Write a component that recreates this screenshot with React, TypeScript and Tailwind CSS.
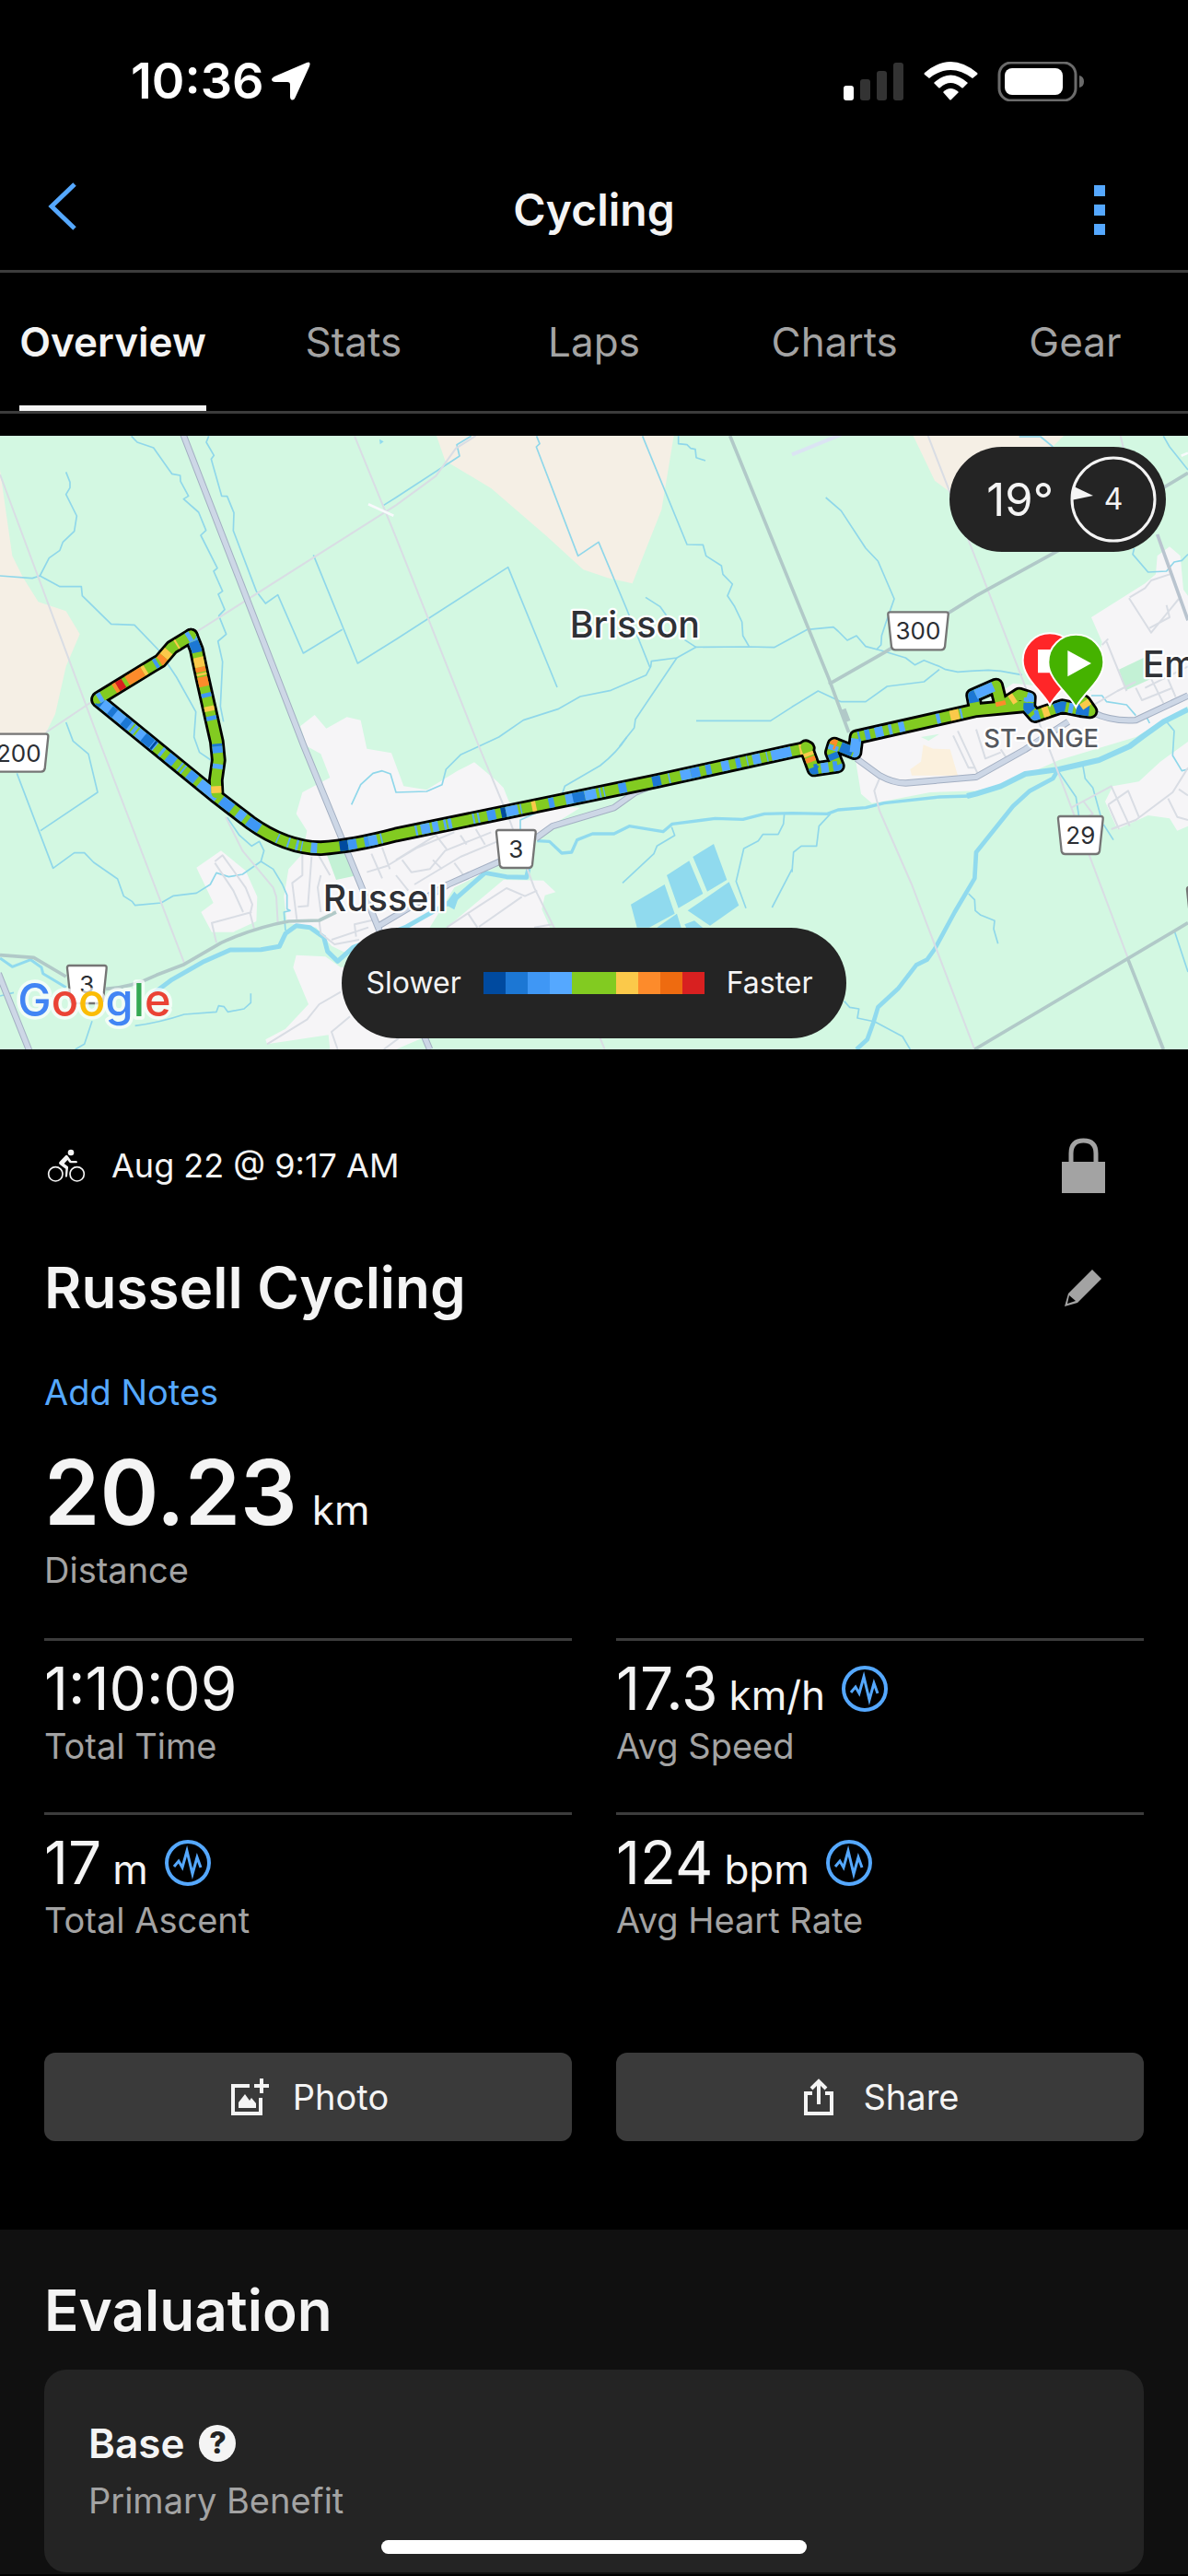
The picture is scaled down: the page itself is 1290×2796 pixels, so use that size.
import React from "react";

const C = {
  navy: "#004a9f",
  deep: "#1c77d4",
  mid: "#3f97f5",
  light: "#55a8ff",
  green: "#82cb21",
  yellow: "#fbc94a",
  orange: "#fd8b2b",
  amber: "#ee6b10",
  red: "#d82020",
};

type Segment = [string, number, number];

/* Each leg is drawn green, with coloured stretches measured along its length. */
const legs: { d: string; length: number; segments: Segment[] }[] = [
  {
    d: "M320 2280 L700 2590 L815 2678 Q930 2760 1045 2762 Q1150 2755 1290 2718 L2140 2543 L2580 2446 L2632 2436",
    length: 2500,
    segments: [
      [C.light, 0, 240], [C.deep, 0, 18], [C.deep, 50, 70], [C.deep, 105, 130], [C.green, 140, 146], [C.green, 158, 164],
      [C.deep, 190, 225], [C.navy, 228, 236], [C.light, 262, 272], [C.mid, 290, 320], [C.light, 340, 346], [C.light, 354, 360],
      [C.mid, 378, 410], [C.light, 425, 500], [C.mid, 515, 560], [C.light, 582, 610], [C.mid, 625, 670], [C.light, 735, 740],
      [C.light, 772, 778], [C.light, 800, 808], [C.light, 818, 822], [C.light, 850, 870], [C.navy, 944, 972], [C.mid, 972, 1000],
      [C.mid, 1026, 1040], [C.light, 1040, 1068], [C.light, 1080, 1085], [C.light, 1195, 1202], [C.light, 1214, 1244],
      [C.light, 1252, 1272], [C.light, 1290, 1298], [C.light, 1304, 1316], [C.light, 1386, 1392], [C.light, 1402, 1408],
      [C.mid, 1434, 1462], [C.navy, 1480, 1496], [C.light, 1496, 1536], [C.light, 1544, 1548], [C.yellow, 1582, 1596],
      [C.mid, 1638, 1656], [C.light, 1694, 1722], [C.deep, 1718, 1758], [C.light, 1758, 1796], [C.light, 1806, 1811],
      [C.light, 1820, 1824], [C.mid, 1870, 1896], [C.deep, 1982, 2010], [C.light, 2036, 2041], [C.light, 2076, 2110],
      [C.mid, 2110, 2140], [C.mid, 2160, 2178], [C.light, 2212, 2238], [C.mid, 2260, 2276], [C.light, 2296, 2300],
      [C.light, 2316, 2342], [C.light, 2362, 2366], [C.light, 2378, 2444], [C.yellow, 2472, 2484],
    ],
  },
  {
    d: "M705 2582 L703 2540 L712 2475 L706 2415 L660 2210 L640 2115 L622 2070",
    length: 520,
    segments: [
      [C.yellow, 0, 22], [C.light, 78, 94], [C.mid, 130, 152], [C.deep, 152, 160], [C.mid, 238, 252], [C.yellow, 268, 284],
      [C.mid, 314, 328], [C.orange, 350, 382], [C.yellow, 386, 394], [C.orange, 398, 414], [C.yellow, 414, 446],
      [C.deep, 462, 500], [C.light, 500, 520],
    ],
  },
  {
    d: "M622 2070 L560 2108 L522 2152 L500 2165 L320 2275",
    length: 365,
    segments: [
      [C.light, 0, 14], [C.yellow, 50, 56], [C.yellow, 88, 112], [C.orange, 112, 132], [C.mid, 140, 152], [C.yellow, 184, 196],
      [C.orange, 196, 255], [C.red, 268, 292], [C.orange, 292, 304], [C.light, 350, 365],
    ],
  },
  {
    d: "M2625 2432 L2652 2505 L2728 2494 L2710 2450 L2718 2424 L2784 2450 L2790 2400 L3180 2312 L3350 2296",
    length: 880,
    segments: [
      [C.yellow, 18, 30], [C.orange, 34, 50], [C.deep, 68, 86], [C.light, 96, 120], [C.mid, 134, 150], [C.deep, 170, 190],
      [C.light, 200, 216], [C.orange, 218, 226], [C.deep, 240, 280], [C.light, 284, 330], [C.mid, 340, 346], [C.mid, 362, 378],
      [C.light, 394, 420], [C.light, 438, 448], [C.light, 470, 488], [C.light, 590, 602], [C.yellow, 634, 662], [C.light, 666, 672],
    ],
  },
  {
    d: "M3178 2308 L3170 2265 L3245 2232 L3262 2300 L3320 2262 L3352 2272 L3350 2305 L3372 2330 L3460 2300 L3520 2312 L3552 2316 L3530 2285",
    length: 560,
    segments: [
      [C.deep, 20, 50], [C.light, 50, 110], [C.orange, 170, 184], [C.yellow, 220, 236], [C.light, 276, 296], [C.deep, 300, 330],
      [C.mid, 342, 360], [C.yellow, 372, 392], [C.deep, 410, 446], [C.light, 456, 470], [C.deep, 480, 520], [C.yellow, 540, 560],
    ],
  },
];

function Shield({ x, y, w, label }: { x: number; y: number; w: number; label: string }) {
  return (
    <g transform={`translate(${x} ${y})`}>
      <path
        d={`M10 3 H${w - 10} Q${w - 2} 3 ${w - 3} 12 L${w - 14} 116 Q${w - 16} 126 ${w - 26} 126 H26 Q16 126 14 116 L3 12 Q2 3 10 3 Z`}
        fill="#fff"
        stroke="#757575"
        strokeWidth="7"
      />
      {label && (
        <text x={w / 2} y="93" textAnchor="middle" fontSize="78" fill="#2b2e33">
          {label}
        </text>
      )}
    </g>
  );
}

function RouteMap() {
  return (
    <svg
      className="block h-[666px] w-full font-['Inter',sans-serif]"
      viewBox="0 1419 3870 1998"
      preserveAspectRatio="xMidYMid slice"
      role="img"
      aria-label="Route map"
    >
      <rect y="1419" width="3870" height="1998" fill="#d3f8e2" />

      {/* farmland */}
      <g fill="#f5efe5">
        <path d="M0 1530 L20 1670 40 1810 75 1880 125 1960 215 1990 260 2065 215 2170 180 2325 150 2385 0 2480Z" />
        <path d="M1422 1419 L1450 1500 1600 1590 1780 1745 1900 1855 1980 1882 2060 1900 2155 1660 2195 1419Z" />
        <path d="M2975 1419 L3045 1565 3200 1680 3465 1419Z" />
      </g>

      {/* built-up areas */}
      <g fill="#f6f5f7">
        <path d="M978 2365 L1025 2328 1063 2372 1130 2335 1175 2345 1195 2438 1275 2452 1315 2560 1390 2572 1490 2510 1545 2482 1620 2545 1640 2565 1660 2615 1890 2630 1745 2720 1620 2820 1480 2890 1400 3020 1290 3080 1120 3100 1080 3080 1030 3020 935 3005 925 2920 940 2830 985 2780 1000 2705 965 2650 985 2580 1075 2532 1045 2455 1000 2430Z" />
        <path d="M640 2825 L720 2770 800 2835 838 2920 835 3000 760 3035 690 3035 655 2970 695 2940Z" />
        <path d="M965 3110 L955 3150 1005 3270 930 3350 865 3385 870 3400 1070 3370 1075 3417 1290 3417 1400 3370 1400 3110 1455 3020 1640 2865 1770 2867 1810 2905 1775 2915 1765 2960 1800 3040 1110 3150 1060 3115Z" />
        <path d="M2775 2400 L3180 2310 3300 2225 3555 2250 3590 2090 3555 2010 3730 1900 3765 1870 3770 1810 3810 1780 3845 1810 3855 1920 3870 1940 3870 2300 3700 2400 3450 2475 3280 2550 3180 2575 3030 2580 2875 2610 2840 2615 2805 2585Z" />
        <path d="M3870 2415 L3780 2480 3710 2545 3625 2560 3600 2610 3640 2700 3740 2655 3810 2665 3835 2705 3870 2690Z" />
      </g>
      <path d="M1065 2785 L1120 2775 1165 2850 1095 2865Z M3645 2180 L3730 2140 3750 2210 3668 2248Z" fill="#c3f1d5" />
      <path d="M3008 2425 L3040 2438 3095 2440 3120 2525 2970 2525 2965 2505 3000 2480Z" fill="#fbf0dd" />
      <path d="M3000 2400 L3060 2390 3025 2412Z" fill="#d3f8e2" />

      {/* quarry ponds */}
      <g fill="#90daee">
        <path d="M2055 2945 L2165 2880 2198 2975 2115 3020 2075 3020Z M2172 2850 L2245 2803 2290 2910 2210 2957Z M2257 2790 L2325 2748 2368 2865 2304 2903Z M2240 2965 L2375 2872 2407 2948 2313 3014Z M2140 3020 L2205 2975 2222 3030Z M2230 3010 L2262 2998 2300 3030 2240 3030Z" />
        <path d="M1236 1430 l14 8 -12 9Z" />
      </g>

      {/* streams */}
      <g fill="none" stroke="#8fd7ea" strokeWidth="5" strokeLinejoin="round">
        <g transform="translate(0 1380)">
          <path d="M0 495 L105 503 130 495 160 437 195 412 205 385 242 350 250 300 215 230 228 208 228 190 215 157" />
          <path d="M130 495 L195 530 265 530 268 560 362 652 438 655 515 735 575 825 638 938 632 1020 650 1070 687 1095" />
          <path d="M428 40 L447 60 500 78 560 163 587 168 588 187 614 235 598 245 647 288 671 347 654 363 708 470 696 480 725 545 711 555 732 605 713 625 737 685 710 708 725 775 718 920 728 970" />
          <path d="M680 40 L672 60 697 103 688 115 722 235 740 236 762 290 760 348 835 545 865 585 905 557 988 747 1115 670" />
          <path d="M1021 427 L1165 780 1290 702 1655 467 1815 858" />
          <path d="M1250 265 L1290 240 1497 105 1488 68 1535 40" />
          <path d="M215 972 L238 1033 288 1075 318 1200 132 1325" />
        </g>
        <g transform="translate(0 2400)">
          <path d="M55 118 L173 427 242 377 275 377 305 408 383 462 403 518 430 535 440 548 525 540 565 517 640 508 685 480 705 442 745 455 790 447 850 405 860 370 845 340 820 355 780 320 740 262" />
          <path d="M850 405 L890 430 920 480 935 515 935 560 945 565 925 570 930 630" />
          <path d="M440 940 Q520 930 600 903 L705 895 712 875 730 878 742 895 795 885 817 865 817 835 M300 925 L275 1000 245 1017 M0 843 L45 832" />
          <path d="M1145 220 L1175 155 1215 118 1245 110 1272 120 1290 180 1390 177 1440 155 1453 105 1500 58 1625 0 1705 -55 1820 -92 1890 -132 1990 -152 2105 -202 2120 -230 2122 -247 2205 -258 2268 -293 2440 -294 2522 -292 2580 -323" />
          <path d="M2042 0 Q2010 50 1955 93 L1840 160 1830 190 M1695 300 V270 L1750 245" />
        </g>
        <g transform="translate(1290 1380)">
          <path d="M458 40 L468 65 457 75 593 430 660 385 750 600 828 795" />
          <path d="M803 40 L948 393 1000 394 1010 430 1060 462 1065 490 1096 522 1080 560 1102 593 1127 645 1130 690 1150 725" />
          <path d="M813 565 L860 595 885 630 M940 703 L978 728 M915 762 L780 962 776 990 728 1050" />
          <path d="M978 967 L1220 967 1290 922 1375 870 1450 905 1530 905 1600 855 1720 840 1770 800" />
          <path d="M920 40 L920 65 948 68 960 80 975 83 978 110 1008 120" />
        </g>
        <g transform="translate(2580 1380)">
          <path d="M110 240 L160 283 240 405 280 447 333 570 305 650 292 690 290 720 275 735" />
          <path d="M0 697 L50 670 135 662 150 675 180 705 210 690 240 725 290 738 370 762 400 785 430 770 480 790 500 800 540 808 580 805 640 802 680 805 750 818" />
          <path d="M740 42 L810 42 850 75 M1210 40 L1230 75 1290 150 M1115 405 L1110 425 1160 483 1220 480 1245 450 1270 445 1290 425" />
          <path d="M975 885 L1010 885 1025 905 1090 915 1120 950 M1155 955 L1165 975 M1220 970 L1245 1000 1240 1080 1270 1130 1290 1125" />
        </g>
        <g transform="translate(2580 2400)">
          <path d="M125 250 L88 290 80 355 30 355 5 375 0 440 M870 115 L925 195 935 260 M948 95 L955 135 980 165 1005 255 M1015 285 L1047 335" />
          <path d="M575 510 L595 530 597 565 615 580 660 598 657 625 671 673 M1247 635 L1290 765 M170 860 L188 880 218 885 213 915 270 927 360 975 385 1017" />
          <path d="M-25 250 L-28 283 -45 317 -95 317 -110 338 -157 363 -182 470 -150 557 M0 430 L-65 555 M-392 293 L-382 320 -440 355 -450 380 -552 475" />
        </g>
      </g>

      {/* rivers */}
      <g fill="none" stroke="#90daee" strokeLinejoin="round">
        <path d="M500 3235 L560 3190 660 3133 750 3093 850 3092 910 3082 930 3040 965 3014 1010 3020 1055 3052 1067 3098 1100 3130 1150 3085 1320 3020 1390 2980 1480 2930 1580 2842 1650 2855 1715 2857 1722 2828" strokeWidth="15" />
        <path d="M1750 2738 L1790 2740 1830 2778 1862 2775 1880 2735 1930 2715 2000 2715 2050 2690 2160 2708 2190 2683 2330 2665 2420 2668 2490 2650 2580 2648 2695 2650 2730 2637 2820 2630 2880 2615 3060 2595 3160 2592" strokeWidth="10" />
        <path d="M3150 2592 L3180 2585 3260 2560 3340 2520 3450 2505 3580 2475 3680 2430 3720 2400 3790 2350 3870 2310" strokeWidth="18" />
        <path d="M3445 2510 L3430 2535 3355 2575 3300 2625 3180 2775 3175 2860 3110 2970 3045 3090 3020 3125 2985 3142 2925 3220 2860 3280 2845 3330 2825 3385 2790 3417" strokeWidth="14" />
        <path d="M0 3120 L40 3148 100 3125 135 3150 140 3170 215 3215" strokeWidth="9" />
      </g>
      <path d="M1450 2945 L1480 2903 1495 2920 1480 2962Z" fill="#90daee" />

      {/* minor roads */}
      <g fill="none" stroke="#d9dde4" strokeWidth="6" strokeLinejoin="round">
        <path d="M0 1545 L330 2430 600 3135 M150 2385 L620 2070 1290 1645 1420 1550 1485 1460 1550 1419 M1155 1420 L1290 1750 1560 2430 1660 2670 1740 2890 1810 3030 1970 3417" />
        <path d="M735 2660 L790 2770 890 2890 900 2920 905 3005 M3023 1419 L3330 2210 3430 2470 3870 3640 M2865 2535 L2848 2575 2865 2640 2970 2880 3175 3417 M3650 1419 L3670 1500" />
        <path d="M700 2805 L725 2785 800 2890 822 2945 815 2975 828 3025 M700 2810 L760 2900 792 2970 M820 2970 L690 3005 705 3070" />
        <path d="M985 2780 V2850 L952 2875 967 2995 M1015 2790 L1003 2950 970 2953 M1035 2780 L1075 2850 M1045 2850 L1035 2890 1045 2970 M1040 3000 L1045 3040 1090 3075 1170 3060 M1160 3050 L1155 3010 1220 2995 M1080 3060 L1200 3020" />
        <path d="M1195 2840 L1260 2820 1360 2760 1480 2710 M1210 2780 L1245 2860 M1245 2760 L1270 2830 M1290 2800 L1420 2720 1455 2765 M1310 2800 L1340 2840 1400 2830 1450 2770 1600 2710 M1410 2800 L1440 2830 M1480 2810 L1510 2850 M1500 2720 L1520 2750 M1550 2700 L1580 2750 M1350 2880 L1500 2790 1620 2740 M1290 2850 L1330 2900" />
        <path d="M1455 3020 L1560 2950 1650 2892 1710 2918 1750 2900 M1525 2975 L1555 3020 M1560 3018 L1700 2920 M1740 3020 L1800 3010 M870 3400 L1000 3320 1040 3270 1110 3230 M1100 3417 L1080 3360 1140 3310 M1250 3417 L1300 3380" />
        <path d="M3105 2395 L3155 2500 3175 2500 M3120 2380 L3190 2530 M3180 2375 L3210 2470 3260 2450 M3260 2440 L3280 2470" />
        <path d="M3680 1945 L3730 1915 3750 1890 3810 1870 M3678 1948 L3750 2060 3840 1950 M3745 2045 L3810 2010 3800 1970 M3605 2090 L3670 2250 M3610 2080 L3590 2100 M3555 2300 L3640 2250 3700 2220 M3700 2240 L3720 2280 3820 2240 M3730 2240 L3870 2170 M3745 2200 L3790 2290 M3800 2200 L3830 2270" />
        <path d="M3490 2630 L3620 2560 3680 2690 M3620 2700 L3700 2670 3820 2580 3870 2500 M3610 2620 L3675 2575 3710 2660 M3610 2620 L3645 2700 M3530 2610 L3560 2650 3520 2670 M3805 2600 L3835 2660 3870 2670 M3840 2570 L3870 2590" />
      </g>
      <path d="M1200 1642 L1282 1679 M3848 1484 L3870 1475" stroke="#f8fafc" strokeWidth="8" />
      <path d="M2580 1480 L2740 1415" stroke="#dbe4f3" strokeWidth="12" />

      {/* county roads */}
      <g fill="none" stroke="#b1c9c8" strokeWidth="11" strokeLinejoin="round">
        <path d="M2378 1419 L2580 1915 2700 2210 2765 2385 M2700 2228 L2880 2125 3180 1940 3480 1775 3870 1540" />
        <path d="M3770 1740 L3870 2020" stroke="#b9c4cf" />
        <path d="M0 3110 L110 3118 215 3180 M345 3220 Q430 3215 510 3175 L600 3140 720 3070 Q830 3020 940 3000 L1040 2997 1095 2970" />
        <path d="M3175 3417 L3870 3005 M3675 3125 L3790 3417" />
        <path d="M2745 2310 L2760 2350" strokeWidth="22" />
      </g>

      {/* highways */}
      <g fill="none" strokeLinejoin="round">
        {[
          ["#a3afc2", 22],
          ["#cdd7e6", 16],
        ].map(([stroke, width]) => (
          <g key={stroke} stroke={stroke as string} strokeWidth={width}>
            <path d="M597 1415 L990 2430 1240 3040 1400 3417 M-5 3170 L95 3420" />
            <path d="M1225 3020 L1460 2880 1640 2800 M1745 2730 L1800 2690 2000 2630 2070 2580 2120 2560" />
            <path d="M2790 2470 L2865 2525 Q2910 2550 2950 2550 L3180 2530 3340 2440 3480 2350 M3560 2320 Q3620 2350 3700 2345 L3870 2265" />
          </g>
        ))}
      </g>

      {/* place names */}
      <g fill="#2f3136" stroke="#fff" strokeWidth="14" strokeLinejoin="round" paintOrder="stroke" fontWeight="500">
        <text x="1856" y="2075" fontSize="118">Brisson</text>
        <text x="1052" y="2966" fontSize="118">Russell</text>
        <text x="3722" y="2204" fontSize="118">Em</text>
        <text x="3392" y="2434" fontSize="82" fill="#55585e" textAnchor="middle">
          ST-ONGE
        </text>
      </g>

      <Shield x={-38} y={2387} w={198} label="200" />
      <Shield x={216} y={3141} w={134} label="3" />
      <Shield x={1614} y={2700} w={134} label="3" />
      <Shield x={2890} y={1990} w={202} label="300" />
      <Shield x={3444} y={2655} w={152} label="29" />
      <Shield x={3864} y={2885} w={134} label="" />

      {/* recorded track */}
      <g fill="none" strokeLinejoin="round">
        {legs.map((leg) => (
          <path key={leg.d} d={leg.d} stroke="#000" strokeWidth="50" strokeLinecap="round" />
        ))}
        {legs.map((leg) => (
          <g key={leg.d}>
            <path d={leg.d} stroke={C.green} strokeWidth="33" strokeLinecap="round" />
            {leg.segments.map(([color, from, to]) => (
              <path
                key={`${color}${from}`}
                d={leg.d}
                pathLength={leg.length}
                stroke={color}
                strokeWidth="33"
                strokeDasharray={`0 ${from} ${to - from} 4000`}
              />
            ))}
          </g>
        ))}
      </g>

      {/* finish and start pins */}
      <g stroke="#fff" strokeWidth="6">
        <path d="M3420 2297 C3398 2252 3332 2210 3332 2150 A88 88 0 0 1 3508 2150 C3508 2210 3442 2252 3420 2297Z" fill="#ff2628" />
        <path d="M3384 2118 h70 v70 h-70Z" fill="#fff" />
        <path d="M3505 2303 C3483 2258 3415 2216 3415 2156 A90 90 0 0 1 3595 2156 C3595 2216 3527 2258 3505 2303Z" fill="#45b200" />
        <path d="M3478 2118 L3555 2160 L3478 2203Z" fill="#fff" stroke="none" />
      </g>

      <text
        x="58"
        y="3308"
        fontSize="146"
        fontWeight="500"
        stroke="#fff"
        strokeOpacity="0.7"
        strokeWidth="22"
        strokeLinejoin="round"
        paintOrder="stroke"
      >
        <tspan fill="#4285f4">G</tspan>
        <tspan fill="#ea4335">o</tspan>
        <tspan fill="#fbbc05">o</tspan>
        <tspan fill="#4285f4">g</tspan>
        <tspan fill="#34a853">l</tspan>
        <tspan fill="#ea4335">e</tspan>
      </text>
    </svg>
  );
}

function StatusBar() {
  return (
    <div className="flex h-[162px] items-center justify-between pt-[14px] pr-[112px] pl-[142px]">
      <div className="flex items-center gap-2">
        <span className="text-[54px] leading-none font-semibold text-white">10:36</span>
        <svg className="size-[42px]" viewBox="0 0 42 42" fill="#fff" aria-hidden="true">
          <path d="M38 1 Q43 -1 41 5 L26 38 Q24 43 21 41 Q20 40 20 38 V25 Q20 22 17 22 H4 Q0 22 0 19 Q0 18 3 16Z" />
        </svg>
      </div>
      <svg className="h-[43px] w-[262px]" viewBox="916 65 262 43" aria-hidden="true">
        <rect x="916" y="91" width="11" height="16" rx="3" fill="#fff" />
        <g fill="#333">
          <rect x="934" y="84" width="11" height="23" rx="3" />
          <rect x="952" y="75" width="11" height="32" rx="3" />
          <rect x="970" y="66" width="11" height="41" rx="3" />
        </g>
        <g fill="#fff">
          <path d="M1004 77 Q1032 53 1061 77 Q1062 78 1061 79 L1056 83 Q1032 65 1009 83 L1004 79 Q1003 78 1004 77Z" />
          <path d="M1014 88 Q1032 71 1051 88 L1046 93 Q1045 94 1044 93 Q1032 83 1021 93 Q1020 94 1019 93Z" />
          <path d="M1024 98 Q1032 90 1041 98 L1033 106 Q1032 107 1031 106Z" />
        </g>
        <rect x="1085" y="66" width="83" height="41" rx="13" fill="none" stroke="#6b6b6b" strokeWidth="3" />
        <rect x="1091" y="72" width="63" height="29" rx="8" fill="#fff" />
        <path d="M1172 80 Q1177 81 1177 86.500 Q1177 92 1172 93Z" fill="#6b6b6b" />
      </svg>
    </div>
  );
}

const tabs = ["Overview", "Stats", "Laps", "Charts", "Gear"];

const stats = [
  { value: "1:10:09", unit: "", label: "Total Time", chart: false },
  { value: "17.3", unit: "km/h", label: "Avg Speed", chart: true },
  { value: "17", unit: "m", label: "Total Ascent", chart: true },
  { value: "124", unit: "bpm", label: "Avg Heart Rate", chart: true },
];

const legend = [
  "bg-[#004a9f]",
  "bg-[#1c77d4]",
  "bg-[#3f97f5]",
  "bg-[#55a8ff]",
  "bg-[#82cb21]",
  "bg-[#82cb21]",
  "bg-[#fbc94a]",
  "bg-[#fd8b2b]",
  "bg-[#ee6b10]",
  "bg-[#d82020]",
];

function PulseIcon() {
  return (
    <svg className="size-[50px]" viewBox="-25 -25 50 50" fill="none" stroke="#55a8ff" aria-hidden="true">
      <circle r="23" strokeWidth="4" />
      <path d="M-15 4 L-10 -2 -6 5 -1 -13 5 12 10 -6 14 5" strokeWidth="3" />
    </svg>
  );
}

export default function App() {
  return (
    <main className="min-h-screen overflow-x-hidden bg-black font-['Inter',sans-serif] text-[#f4f4f4]">
      <StatusBar />

      <header className="grid h-[134px] grid-cols-[1fr_auto_1fr] items-center border-b-3 border-[#3c3c3c] pr-[90px] pl-[52px]">
        <button type="button" aria-label="Back" className="w-fit pb-2">
          <svg className="h-[52px] w-8" viewBox="0 0 32 52" fill="none" stroke="#55a8ff" strokeWidth="5" aria-hidden="true">
            <path d="M29 2 L4 26 L29 50" />
          </svg>
        </button>
        <h1 className="pl-[38px] text-[48px] leading-none font-semibold">Cycling</h1>
        <button type="button" aria-label="More options" className="flex w-8 flex-col items-end gap-[9px] justify-self-end">
          <span className="size-3 bg-[#55a8ff]" />
          <span className="size-3 bg-[#55a8ff]" />
          <span className="size-3 bg-[#55a8ff]" />
        </button>
      </header>

      <nav className="border-b-3 border-[#3c3c3c]">
        <div role="tablist" className="-mx-2 grid h-[150px] grid-cols-5 justify-items-center">
          {tabs.map((tab, i) => (
            <button
              key={tab}
              type="button"
              role="tab"
              aria-selected={i === 0}
              className={
                i === 0
                  ? "border-y-6 border-t-transparent border-b-[#f4f4f4] text-[44px] font-semibold"
                  : "text-[44px] text-[#a3a3a3]"
              }
            >
              {tab}
            </button>
          ))}
        </div>
      </nav>

      <section className="relative mt-6">
        <RouteMap />
        <div className="absolute top-3 right-6 flex h-[114px] items-center gap-[18px] rounded-full bg-[#242424] pr-[10px] pl-[40px]">
          <span className="text-[49px] leading-none">19°</span>
          <span className="relative grid size-[94px] place-items-center text-[32px] leading-none">
            <svg className="absolute inset-0 size-full" viewBox="-47 -47 94 94" aria-hidden="true">
              <circle r="45" fill="none" stroke="#f4f4f4" strokeWidth="3" />
              <path d="M-43 -14 L-22 -4 L-46 1Z" fill="#f4f4f4" />
            </svg>
            4
          </span>
        </div>
        <div className="absolute inset-x-0 bottom-3 flex justify-center">
          <div className="flex h-[120px] w-[548px] items-center justify-center gap-6 rounded-full bg-[#242424] pr-[10px] text-[32px]">
            <span>Slower</span>
            <span className="flex">
              {legend.map((color, i) => (
                <span key={i} className={`size-6 ${color}`} />
              ))}
            </span>
            <span>Faster</span>
          </div>
        </div>
      </section>

      <section className="px-12 pt-24 pb-24">
        <div className="flex h-[60px] items-center justify-between pr-[42px]">
          <div className="flex items-center gap-7 text-[36px]">
            <svg className="h-[36px] w-[45px]" viewBox="24 33 135 108" fill="none" stroke="#f4f4f4" aria-hidden="true">
              <circle cx="61" cy="115" r="23" strokeWidth="5" />
              <circle cx="131" cy="115" r="23" strokeWidth="5" />
              <circle cx="111" cy="45" r="10" fill="#f4f4f4" stroke="none" />
              <path
                d="M94 54 Q98 52 101 56 L112 72 H128 Q132 73 132 76 Q132 79 128 79 H110 Q107 79 105 76 L100 69 L89 81 L100 89 Q103 91 102 95 L99 122 Q98 125 95 125 Q92 124 93 120 L94 98 L75 84 Q70 80 74 75Z"
                fill="#f4f4f4"
                stroke="none"
              />
            </svg>
            <time>Aug 22 @ 9:17 AM</time>
          </div>
          <button type="button" aria-label="Privacy">
            <svg className="h-[60px] w-[47px]" viewBox="0 0 47 60" aria-hidden="true">
              <rect y="26" width="47" height="34" fill="#a3a3a3" />
              <path d="M10 28 V17 Q10 3 23.500 3 Q37 3 37 17 V28" fill="none" stroke="#a3a3a3" strokeWidth="5" />
            </svg>
          </button>
        </div>

        <div className="mt-[63px] flex h-20 items-center justify-between pr-[46px]">
          <h2 className="text-[62px] leading-none font-semibold">Russell Cycling</h2>
          <button type="button" aria-label="Edit name">
            <svg className="size-10" viewBox="0 0 40 40" fill="#a3a3a3" aria-hidden="true">
              <path fillRule="evenodd" d="M30 0 L40 10 14 36 0 40 4 26Z M5 28 L3 37 12 34Z" />
            </svg>
          </button>
        </div>

        <a href="#notes" className="mt-[49px] block h-12 w-fit text-[38px] leading-[48px] text-[#55a8ff]">
          Add Notes
        </a>

        <p className="mt-[35px] flex h-[100px] items-baseline gap-4 text-[97px] leading-[100px] font-semibold">
          20.23
          <span className="text-[44px] leading-none font-normal">km</span>
        </p>
        <p className="mt-[10px] text-[38px] leading-[48px] text-[#a3a3a3]">Distance</p>

        <dl className="mt-[50px] grid grid-cols-2 gap-x-12">
          {stats.map((s) => (
            <div key={s.label} className="flex flex-col-reverse border-t-3 border-[#3c3c3c] pt-5 pb-12">
              <dt className="mt-[6px] text-[38px] leading-[48px] text-[#a3a3a3]">{s.label}</dt>
              <dd className="flex h-16 items-center gap-[18px]">
                <span className="flex items-baseline gap-3 text-[64px] leading-none">
                  {s.value}
                  {s.unit && <span className="text-[44px] leading-none">{s.unit}</span>}
                </span>
                {s.chart && (
                  <button type="button" aria-label={`${s.label} chart`}>
                    <PulseIcon />
                  </button>
                )}
              </dd>
            </div>
          ))}
        </dl>

        <div className="mt-[72px] grid grid-cols-2 gap-x-12 text-[38px]">
          <button type="button" className="flex h-24 items-center justify-center gap-[26px] rounded-xl bg-[#3a3a3a] pl-1">
            <svg className="size-[41px]" viewBox="0 0 41 41" fill="none" stroke="#f4f4f4" strokeWidth="4" aria-hidden="true">
              <path d="M20 8 H2 V38 H32 V21 M33 0 V16 M25 8 H41" />
              <path d="M8 32 V26 L15 17 L20 24 L22 21 L27 27 V32Z" fill="#f4f4f4" stroke="none" />
            </svg>
            Photo
          </button>
          <button type="button" className="flex h-24 items-center justify-center gap-[32px] rounded-xl bg-[#3a3a3a] pl-1">
            <svg className="h-[41px] w-[32px]" viewBox="0 0 32 41" fill="none" stroke="#f4f4f4" strokeWidth="4" aria-hidden="true">
              <path d="M9 16 H2 V38 H30 V16 H23 M16 28 V4 M8 11 L16 3 L24 11" />
            </svg>
            Share
          </button>
        </div>
      </section>

      <section className="bg-[#101010] px-12 pt-12 pb-[2px]">
        <h2 className="text-[62px] leading-[80px] font-semibold">Evaluation</h2>
        <div className="mt-6 rounded-3xl bg-[#242424] px-12 pt-14 pb-[54px]">
          <div className="flex h-12 items-center gap-4">
            <h3 className="text-[44px] leading-none font-semibold">Base</h3>
            <button
              type="button"
              aria-label="About Base"
              className="grid size-10 place-items-center rounded-full bg-[#f4f4f4] text-[32px] leading-none font-extrabold text-[#242424]"
            >
              ?
            </button>
          </div>
          <p className="mt-[14px] text-[38px] leading-[48px] text-[#a3a3a3]">Primary Benefit</p>
        </div>
      </section>

      <div className="fixed inset-x-0 bottom-6 flex justify-center">
        <div className="h-[15px] w-[462px] rounded-full bg-white" />
      </div>
    </main>
  );
}
